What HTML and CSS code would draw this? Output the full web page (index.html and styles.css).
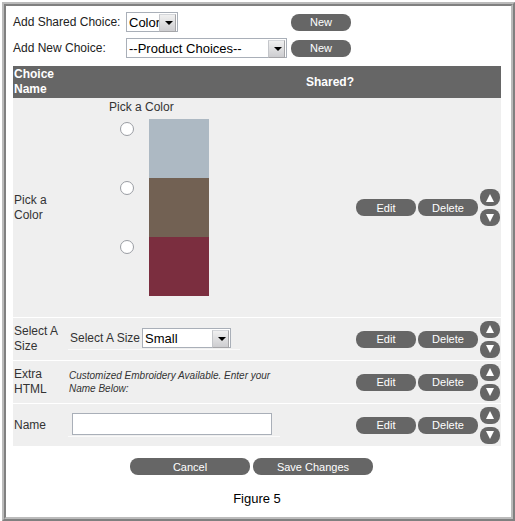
FILE: index.html
```html
<!DOCTYPE html>
<html lang="en">
<head>
  <meta charset="UTF-8">
  <title>Product Choices</title>
  <link rel="stylesheet" href="styles.css">
</head>
<body>
  <div class="frame">
    <div class="panel">

      <form class="add-form">
        <label for="sharedChoice">Add Shared Choice:</label>
        <span class="select">
          <select id="sharedChoice">
            <option>Color</option>
          </select>
        </span>
        <button type="button" class="btn">New</button>

        <label for="newChoice">Add New Choice:</label>
        <span class="select select-wide">
          <select id="newChoice">
            <option>--Product Choices--</option>
          </select>
        </span>
        <button type="button" class="btn">New</button>
      </form>

      <table class="choices">
        <thead>
          <tr>
            <th class="col-name">Choice Name</th>
            <th></th>
            <th class="col-shared">Shared?</th>
            <th class="col-actions"></th>
          </tr>
        </thead>
        <tbody>
          <tr>
            <td>Pick a Color</td>
            <td class="cell-top">
              <fieldset class="colors">
                <legend>Pick a Color</legend>
                <label class="color"><input type="radio" name="color" aria-label="Blue gray"><span class="swatch blue"></span></label>
                <label class="color"><input type="radio" name="color" aria-label="Brown"><span class="swatch brown"></span></label>
                <label class="color"><input type="radio" name="color" aria-label="Burgundy"><span class="swatch burgundy"></span></label>
              </fieldset>
            </td>
            <td></td>
            <td>
              <div class="actions">
                <button type="button" class="btn">Edit</button>
                <button type="button" class="btn">Delete</button>
                <div class="order">
                  <button type="button" class="btn btn-order" aria-label="Move up"><svg width="10" height="8" viewBox="0 0 10 8"><path d="M5 0L9 8H1Z"/></svg></button>
                  <button type="button" class="btn btn-order" aria-label="Move down"><svg width="10" height="8" viewBox="0 0 10 8"><path d="M1 0H9L5 8Z"/></svg></button>
                </div>
              </div>
            </td>
          </tr>
          <tr>
            <td>Select A Size</td>
            <td>
              <div class="field field-size">
                <label for="size">Select A Size</label>
                <span class="select select-size">
                  <select id="size">
                    <option>Small</option>
                  </select>
                </span>
              </div>
            </td>
            <td></td>
            <td>
              <div class="actions">
                <button type="button" class="btn">Edit</button>
                <button type="button" class="btn">Delete</button>
                <div class="order">
                  <button type="button" class="btn btn-order" aria-label="Move up"><svg width="10" height="8" viewBox="0 0 10 8"><path d="M5 0L9 8H1Z"/></svg></button>
                  <button type="button" class="btn btn-order" aria-label="Move down"><svg width="10" height="8" viewBox="0 0 10 8"><path d="M1 0H9L5 8Z"/></svg></button>
                </div>
              </div>
            </td>
          </tr>
          <tr>
            <td>Extra HTML</td>
            <td><p class="note">Customized Embroidery Available. Enter your Name Below:</p></td>
            <td></td>
            <td>
              <div class="actions">
                <button type="button" class="btn">Edit</button>
                <button type="button" class="btn">Delete</button>
                <div class="order">
                  <button type="button" class="btn btn-order" aria-label="Move up"><svg width="10" height="8" viewBox="0 0 10 8"><path d="M5 0L9 8H1Z"/></svg></button>
                  <button type="button" class="btn btn-order" aria-label="Move down"><svg width="10" height="8" viewBox="0 0 10 8"><path d="M1 0H9L5 8Z"/></svg></button>
                </div>
              </div>
            </td>
          </tr>
          <tr>
            <td><label for="name">Name</label></td>
            <td>
              <div class="field field-name">
                <input type="text" id="name">
              </div>
            </td>
            <td></td>
            <td>
              <div class="actions">
                <button type="button" class="btn">Edit</button>
                <button type="button" class="btn">Delete</button>
                <div class="order">
                  <button type="button" class="btn btn-order" aria-label="Move up"><svg width="10" height="8" viewBox="0 0 10 8"><path d="M5 0L9 8H1Z"/></svg></button>
                  <button type="button" class="btn btn-order" aria-label="Move down"><svg width="10" height="8" viewBox="0 0 10 8"><path d="M1 0H9L5 8Z"/></svg></button>
                </div>
              </div>
            </td>
          </tr>
        </tbody>
      </table>

      <div class="footer">
        <button type="button" class="btn btn-wide">Cancel</button>
        <button type="button" class="btn btn-wide">Save Changes</button>
      </div>

      <p class="caption">Figure 5</p>
    </div>
  </div>
</body>
</html>
```
FILE: styles.css
```css
/* Reset */
* {
  margin: 0;
  padding: 0;
  box-sizing: border-box;
}
body {
  font-family: "Liberation Sans", Arial, sans-serif;
  font-size: 12px;
  line-height: 15px;
  color: #333;
  background-color: #fff;
  padding: 2px 0 0 2px;
}

/* Double bevelled frame */
.frame {
  border: 2px solid;
  border-color: #bbb #808080 #808080 #bbb;
}
.panel {
  border: 2px solid;
  border-color: #808080 #bbb #bbb #808080;
  padding: 6px 10px 11px 7px;
}

.add-form {
  display: grid;
  grid-template-columns: 113px 161px auto;
  row-gap: 6px;
  align-items: center;
  justify-content: start;
  margin-bottom: 8px;
  color: #222;
}
.add-form .btn {
  margin-left: 4px;
}

/* Drop-downs */
.select {
  position: relative;
  display: inline-block;
  width: 52px;
  height: 20px;
}
.select-wide {
  width: 100%;
}
.select-size {
  width: 89px;
}
.select select {
  appearance: none;
  display: block;
  width: 100%;
  height: 100%;
  padding: 0 0 0 2px;
  border: 1px solid #a9afb8;
  border-radius: 0;
  background: #fff;
  font-family: inherit;
  font-size: 13px;
  color: #000;
}
.select::before {
  content: "";
  position: absolute;
  top: 2px;
  right: 2px;
  width: 15px;
  height: 16px;
  border: 1px solid;
  border-color: #d4d6da #a5a5a8 #a5a5a8 #c4c6ca;
  background: linear-gradient(#f0f0f0, #cdcdd0);
  pointer-events: none;
}
.select::after {
  content: "";
  position: absolute;
  top: 9px;
  right: 5px;
  border: 4px solid transparent;
  border-top-color: #000;
  border-bottom: 0;
  pointer-events: none;
}

/* Buttons */
.btn {
  display: flex;
  align-items: center;
  justify-content: center;
  width: 60px;
  height: 17px;
  border: 0;
  border-radius: 8px;
  background-color: #666;
  color: #fff;
  font-family: inherit;
  font-size: 11px;
  cursor: pointer;
}
.btn-order {
  width: 20px;
}
.btn-order svg {
  fill: #fff;
  flex: none;
}
.btn-wide {
  width: 120px;
}

/* Choices table */
.choices {
  width: 100%;
  border-collapse: collapse;
  table-layout: fixed;
}
.choices th {
  height: 32px;
  background-color: #666;
  color: #fff;
  text-align: center;
}
.choices th.col-name {
  width: 55px;
  padding-left: 1px;
  text-align: left;
}
.col-shared {
  width: 50px;
}
.col-actions {
  width: 146px;
}
.choices td {
  height: 43px;
  background-color: #efefef;
  border-bottom: 1px solid #fff;
  vertical-align: middle;
}
.choices td:first-child {
  padding-left: 1px;
}
.choices td.cell-top {
  vertical-align: top;
}

.colors {
  border: 0;
  padding: 1px 0 21px 41px;
}
.colors legend {
  padding: 2px 0 3px 0;
}
.color {
  display: flex;
  align-items: flex-start;
  gap: 15px;
  padding-left: 11px;
}
.color input {
  appearance: none;
  width: 14px;
  height: 14px;
  margin-top: 3px;
  border: 1px solid #9a9da3;
  border-radius: 50%;
  background: #fff;
}
.swatch {
  width: 60px;
  height: 59px;
}
.blue {
  background-color: #adb9c3;
}
.brown {
  background-color: #726153;
}
.burgundy {
  background-color: #7b2e3f;
}

.field {
  display: flex;
  align-items: center;
  border-bottom: 1px solid #fafafa;
}
.field-size {
  width: 172px;
  gap: 2px;
  padding: 0 0 1px 2px;
}
.field-name {
  width: 212px;
  padding: 0 0 1px 4px;
}
.field-name input {
  width: 200px;
  height: 22px;
  padding: 0 3px;
  border: 1px solid #a9afb8;
  background: #fff;
  font-family: inherit;
  font-size: 13px;
}
.note {
  max-width: 216px;
  padding-left: 1px;
  font-size: 10px;
  font-style: italic;
  line-height: 13px;
}

.actions {
  display: flex;
  align-items: center;
  justify-content: flex-end;
  gap: 2px;
  padding-right: 1px;
}
.order {
  display: flex;
  flex-direction: column;
  gap: 3px;
}

.footer {
  display: flex;
  justify-content: center;
  gap: 3px;
  margin-top: 11px;
  padding-right: 11px;
}
.caption {
  margin-top: 16px;
  font-size: 13px;
  text-align: center;
  color: #000;
}
```
